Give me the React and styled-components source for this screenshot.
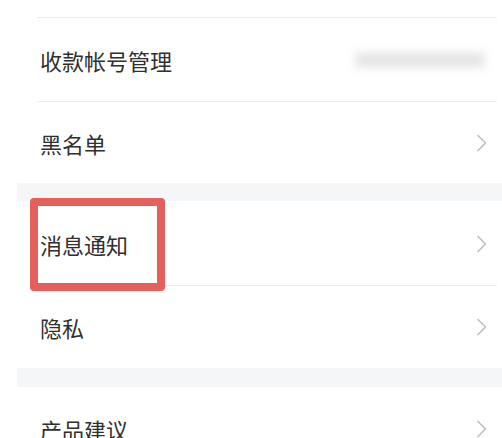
import React from "react";
import styled, { createGlobalStyle } from "styled-components";

const GlobalStyle = createGlobalStyle`
  html, body {
    margin: 0;
    padding: 0;
    background: #ffffff;
    overflow: hidden;
  }
  body {
    font-family: "Noto Sans CJK SC", "Noto Sans", sans-serif;
  }
`;

const Page = styled.div`
  width: 502px;
  height: 438px;
  overflow: hidden;
  padding-left: 17px;
  box-sizing: border-box;
  background: #ffffff;
`;

const List = styled.div`
  background: #f5f6f8;
  display: flex;
  flex-direction: column;
`;

const Group = styled.div`
  background: #ffffff;
  display: flex;
  flex-direction: column;
  margin-bottom: ${(p) => p.gap || 18}px;
`;

const Row = styled.div`
  position: relative;
  height: ${(p) => p.h || 84}px;
  display: flex;
  align-items: center;
  padding: 0 14px 0 23px;
  box-sizing: border-box;

  &::after {
    content: "";
    display: ${(p) => (p.last ? "none" : "block")};
    position: absolute;
    left: 20px;
    right: 5px;
    bottom: 0;
    height: 1px;
    background: #ececee;
  }
`;

const Label = styled.span`
  flex: 1;
  font-size: 22px;
  line-height: 1;
  color: #2f2f2f;
`;

const Blurred = styled.div`
  width: 128px;
  height: 14px;
  margin-right: 4px;
  background: #e2e2e2;
  filter: blur(5px);
`;

const Chevron = styled.svg`
  width: 12px;
  height: 18px;
`;

const Highlight = styled.div`
  position: absolute;
  left: 13px;
  top: -3px;
  width: 135px;
  height: 93px;
  box-sizing: border-box;
  border: 8px solid #e5605a;
  border-radius: 4px;
  z-index: 2;
`;

const Arrow = () => (
  <Chevron viewBox="0 0 12 18" fill="none">
    <path d="M2 1.5 L9.5 9 L2 16.5" stroke="#c0c0c0" strokeWidth="1.7" strokeLinecap="round" strokeLinejoin="round" />
  </Chevron>
);

export default function App() {
  return (
    <>
      <GlobalStyle />
      <Page>
        <List>
          <Group>
            <Row h={18} />
            <Row>
              <Label>收款帐号管理</Label>
              <Blurred />
            </Row>
            <Row last h={81}>
              <Label>黑名单</Label>
              <Arrow />
            </Row>
          </Group>
          <Group gap={19}>
            <Row h={85}>
              <Highlight />
              <Label>消息通知</Label>
              <Arrow />
            </Row>
            <Row last h={82}>
              <Label>隐私</Label>
              <Arrow />
            </Row>
          </Group>
          <Group>
            <Row last>
              <Label>产品建议</Label>
              <Arrow />
            </Row>
          </Group>
        </List>
      </Page>
    </>
  );
}
